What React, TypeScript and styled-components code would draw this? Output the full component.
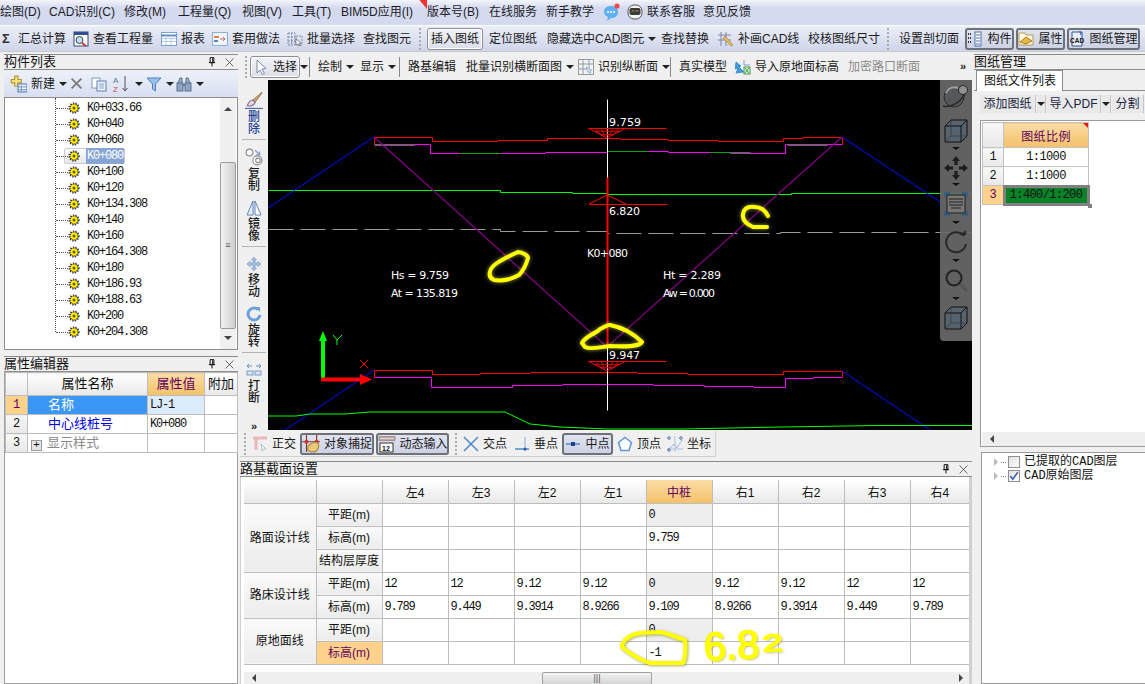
import React from "react";
import styled, { createGlobalStyle, css } from "styled-components";

const UI = `"Liberation Sans", "Noto Sans CJK SC", sans-serif`;
const MONO = `"Liberation Mono", "Noto Sans CJK SC", monospace`;

const Global = createGlobalStyle`
  html, body { margin: 0; padding: 0; background: #f0f0f0; overflow: hidden; }
  * { box-sizing: border-box; }
`;

const Page = styled.div`
  position: relative; width: 1145px; height: 684px; overflow: hidden;
  background: #f0f0f0; font: 12px/16px ${UI}; color: #111;
`;
const MenuBar = styled.div`
  display: flex; align-items: center; height: 26px; padding-bottom: 2px;
  width: 100%;
  background: linear-gradient(#f3f5fb 0, #d5daef 8px, #d3d9ee 100%);
  border-bottom: 1px solid #fff;
`;
const MenuItem = styled.div<{ $w: number }>`
  position: relative; display: flex; align-items: center; gap: 4px;
  flex: 0 0 ${(p) => p.$w}px; white-space: nowrap; color: #1c1c28;
`;
const Flag = styled.span`
  position: absolute; left: -11px; top: -8px; width: 0; height: 0;
  border-top: 13px solid #e33; border-left: 11px solid transparent;
`;
const MainBar = styled.div`
  display: flex; align-items: center; height: 26px;
  background: linear-gradient(#eceef8, #cfd5ea);
  border-bottom: 1px solid #c8c8c8;
  padding-left: 2px;
`;
const Tool = styled.div<{ $w: number; $muted?: boolean }>`
  display: flex; align-items: center; gap: 4px; height: 22px;
  flex: 0 0 ${(p) => p.$w}px; white-space: nowrap;
  color: ${(p) => (p.$muted ? "#8a8a8a" : "#1a1a1a")};
`;
const Sigma = styled.span` font-size: 13px; font-weight: 700; color: #333; `;
const Grip = styled.div`
  flex: 0 0 auto; width: 3px; height: 22px;
  border-left: 2px dotted #aaa; margin-right: auto;
`;
const Sep = styled.div`
  width: 1px; height: 20px; background: #888; margin-right: auto;
`;
const Toggle = styled.div<{ $w: number }>`
  display: flex; align-items: center; justify-content: center; gap: 4px;
  width: ${(p) => p.$w}px; height: 22px; white-space: nowrap;
  border: 1px solid #8b8e98; border-radius: 3px;
  background: linear-gradient(#f2f3f8, #dcdee8);
  box-shadow: inset 0 0 0 1px #fff;
`;
const DarkToggle = styled(Toggle)`
  border: 2px solid #6e7178;
  background: linear-gradient(#e0e3ef, #cdd2e4);
  box-shadow: none;
`;
const Caret = styled.span<{ $ml?: number }>`
  display: inline-block; width: 0; height: 0; flex: none;
  margin-left: ${(p) => p.$ml ?? 0}px;
  border-left: 4px solid transparent; border-right: 4px solid transparent;
  border-top: 4px solid #222;
`;
const Work = styled.div`
  display: grid; grid-template-columns: 240px 732px 173px; height: 632px;
`;
const Column = styled.div`
  display: flex; flex-direction: column; min-width: 0; height: 632px;
`;
const LeftCol = styled(Column)` padding: 2px 2px 0 4px; `;
const PanelTitle = styled.div<{ $mt?: number }>`
  display: flex; align-items: center; justify-content: space-between;
  flex: none; height: 16px; padding: 0 4px 0 0; margin-top: ${(p) => p.$mt ?? 0}px;
  font-size: 13px; line-height: 14px; color: #111;
  border-top: 1px solid #8c8c8c; border-bottom: 1px solid #8c8c8c;
`;
const TitleBtns = styled.span` display: flex; gap: 8px; align-items: center; `;
const NewBar = styled.div`
  display: flex; align-items: center; flex: none; height: 27px; padding-left: 5px;
  background: linear-gradient(#eef1f9, #d8dff1);
`;
const TreeBox = styled.div`
  position: relative; display: flex; flex: none; height: 253px; background: #fff;
  border: 1px solid #8c8c8c; overflow: hidden;
`;
const TreeList = styled.div`
  position: relative; flex: 1; padding-top: 2px;
  &::before {
    content: ""; position: absolute; left: 50px; top: 0; height: 234px;
    border-left: 1px dotted #555;
  }
`;
const TreeRow = styled.div`
  position: relative; display: flex; align-items: center; height: 16px; padding-left: 63px;
  font: 12px/16px ${MONO}; letter-spacing: -1.2px; color: #111;
  &::before {
    content: ""; position: absolute; left: 51px; top: 8px; width: 12px;
    border-top: 1px dotted #555;
  }
`;
const TreeLabel = styled.span<{ $sel?: boolean }>`
  margin-left: 6px; padding: 0 1px; height: 16px;
  ${(p) => p.$sel && css`background: #86a5d6; color: #fff;`}
`;
const TreeSel = styled.span`
  display: flex; align-items: center; padding-left: 3px; margin-left: -4px;
  border: 1px solid #c8ccd4; border-radius: 2px; height: 16px;
  background: linear-gradient(#fbfbfb, #e8e8ea);
`;
const VScroll = styled.div`
  display: flex; flex-direction: column; flex: 0 0 16px; margin-right: 1px;
  background: #f0f0f0;
`;
const ScrollEnd = styled.div`
  flex: none; height: 64px; display: flex; justify-content: center; padding-top: 9px;
`;
const UpTri = styled.span`
  width: 0; height: 0; border-left: 4px solid transparent; border-right: 4px solid transparent;
  border-bottom: 4px solid #444;
`;
const VThumb = styled.div`
  flex: 0 0 167px; display: flex; align-items: center; justify-content: center;
  border: 1px solid #9a9a9a; border-radius: 2px;
  background: linear-gradient(90deg, #f2f2f2, #cfcfcf);
  font: 9px/9px ${UI}; color: #555;
`;
const DownEnd = styled.div`
  flex: 1; display: flex; justify-content: center; padding-top: 7px;
`;
const DownTri = styled(UpTri)`
  border-bottom: 0; border-top: 4px solid #444;
`;
const PropBox = styled.div`
  flex: 1; background: #fff; border: 1px solid #a0a0a0; border-top: 0; padding: 0;
`;
const PropTable = styled.table`
  border-collapse: collapse; table-layout: fixed; width: 232px; font-size: 12px;
  td, th { border: 1px solid #bdbdbd; height: 19px; padding: 0; font-weight: 400; overflow: hidden; white-space: nowrap; }
`;
const HeadCell = styled.th<{ $hot?: boolean }>`
  && { height: 23px; }
  text-align: center; font-size: 13px;
  background: ${(p) => (p.$hot ? "linear-gradient(#fbdca6,#f3c168)" : "linear-gradient(#fff,#e9e9e9)")};
  color: ${(p) => (p.$hot ? "#600060" : "#111")};
`;
const NumCell = styled.td<{ $hot?: boolean }>`
  text-align: center; font: 12px ${MONO};
  background: ${(p) => (p.$hot ? "#ffd28c" : "linear-gradient(#f8f8f8,#e8e8e8)")};
  color: ${(p) => (p.$hot ? "#600060" : "#111")};
`;
const NameCell = styled.td<{ $tone: "sel" | "link" | "mute" }>`
  font-size: 13px; padding-left: 20px !important;
  background: ${(p) => (p.$tone === "sel" ? "#3a97f5" : "#fff")};
  color: ${(p) => (p.$tone === "sel" ? "#fff" : p.$tone === "link" ? "#0000e6" : "#8a8a8a")};
`;
const ValCell = styled.td<{ $sel?: boolean }>`
  font: 12px ${MONO}; letter-spacing: -1.2px; padding-left: 2px !important;
  background: ${(p) => (p.$sel ? "#dcebfb" : "#fff")};
`;
const Expander = styled.span`
  display: inline-flex; align-items: center; justify-content: center;
  width: 11px; height: 11px; margin: 0 5px 0 -17px; vertical-align: -1px;
  border: 1px solid #999; background: #e6e6e6; color: #111; font: 11px/9px ${MONO};
`;
const CanvasBar = styled.div`
  display: flex; align-items: center; flex: none; height: 27px; margin-top: 1px; padding-left: 5px;
  background: #f0f0f0;
`;
const CanvasRow = styled.div` display: flex; flex: none; height: 350px; `;
const SideBar = styled.div`
  display: flex; flex-direction: column; align-items: center; flex: 0 0 28px;
  padding-top: 11px; background: #f0f0f0; position: relative;
`;
const SideTool = styled.div<{ $h: number }>`
  display: flex; flex-direction: column; align-items: center; gap: 2px;
  flex: 0 0 ${(p) => p.$h}px;
`;
const SideText = styled.div<{ $blue?: boolean }>`
  width: 12px; font-size: 12px; line-height: 12px; font-weight: 500;
  color: ${(p) => (p.$blue ? "#1f3f95" : "#1a1a1a")};
`;
const SideSep = styled.div<{ $after: number }>`
  flex: none; width: 24px; height: 1px; background: #b5b5b5; margin-bottom: ${(p) => p.$after}px;
`;
const SideMore = styled.div`
  font: 700 11px/11px ${UI}; color: #222; margin-top: 13px;
`;
const BarMore = styled(SideMore)` margin-top: 0; `;
const Canvas = styled.div`
  position: relative; flex: 1; background: #000; overflow: hidden;
`;
const Drawing = styled.svg` display: block; width: 704px; height: 350px; `;
const NavPanel = styled.div`
  position: absolute; right: 0; top: 0; width: 32px; height: 261px;
  display: flex; flex-direction: column; align-items: center; padding-top: 2px;
  background: rgba(104,104,104,.93); border-radius: 0 0 0 4px;
`;
const NavCaret = styled.span<{ $t: number; $b: number }>`
  flex: none; width: 0; height: 0; margin: ${(p) => p.$t}px 0 ${(p) => p.$b}px;
  border-left: 4px solid transparent; border-right: 4px solid transparent;
  border-top: 3px solid #111;
`;
const NavGap = styled.div` flex: none; height: 7px; `;
const SnapBar = styled.div`
  display: flex; align-items: center; flex: none; width: 476px; height: 26px; padding-left: 4px;
  margin-top: 1px; border-right: 1px solid #d0d0d0; border-bottom: 1px solid #d0d0d0;
`;
const SectionWrap = styled.div`
  flex: 1; display: flex; flex-direction: column; padding-top: 4px;
`;
const GridBox = styled.div`
  position: relative; flex: 1; display: flex; flex-direction: column; background: #fff;
  padding: 3px 0 0 3px; border-right: 3px solid #d0d0d0; border-left: 1px solid #d0d0d0;
`;
const DataTable = styled.table`
  border-collapse: collapse; table-layout: fixed; width: 725px; font-size: 12px;
  td, th { border: 1px solid #bdbdbd; height: 23px; padding: 0; font-weight: 400; white-space: nowrap; overflow: hidden; }
  tr > *:last-child { border-right: 0; }
  thead th { border-top: 0; }
  thead th:first-child, tbody td:first-child { border-left: 0; }
`;
const ColHead = styled.th<{ $hot?: boolean }>`
  font: 12px ${UI};
  background: ${(p) => (p.$hot ? "linear-gradient(#fbdca6,#f3c168)" : "linear-gradient(#fff,#e8e8e8)")};
  color: ${(p) => (p.$hot ? "#600060" : "#111")};
  text-align: center;
`;
const GroupCell = styled.td`
  text-align: center; background: linear-gradient(#fafafa,#ececec); color: #111;
`;
const RowCell = styled.td<{ $hot?: boolean }>`
  text-align: center;
  background: ${(p) => (p.$hot ? "#ffd28c" : "linear-gradient(#fafafa,#ececec)")};
  color: ${(p) => (p.$hot ? "#600060" : "#111")};
`;
const Cell = styled.td<{ $grey?: boolean }>`
  font: 12px ${MONO}; letter-spacing: -1.2px; padding-left: 2px !important; color: #111;
  background: ${(p) => (p.$grey ? "#eee" : "#fff")};
`;
const HScroll = styled.div`
  display: flex; align-items: center; margin-top: 7px; height: 12px; width: 725px; background: #efefef;
  flex: none;
`;
const HThumb = styled.div`
  flex: none; width: 110px; height: 12px; margin-left: 286px; display: flex; align-items: center; justify-content: center;
  border: 1px solid #a0a0a0; border-bottom: 0; border-radius: 2px 2px 0 0; background: linear-gradient(#f4f4f4,#d4d4d4);
  font: 9px/9px ${UI}; color: #555; letter-spacing: 0;
`;
const LeftTri = styled.span<{ $ml?: number }>`
  flex: none; margin-left: ${(p) => p.$ml ?? 8}px; width: 0; height: 0;
  border-top: 4px solid transparent; border-bottom: 4px solid transparent; border-right: 4px solid #444;
`;
const RightTri = styled.span`
  flex: none; margin-left: auto; margin-right: 6px; width: 0; height: 0;
  border-top: 4px solid transparent; border-bottom: 4px solid transparent; border-left: 4px solid #444;
`;
const RightCol = styled(Column)` padding: 2px 0 0 2px; `;
const TabStrip = styled.div`
  display: flex; flex: none; height: 21px; padding-left: 2px; border-bottom: 1px solid #8c8c8c;
`;
const Tab = styled.div`
  width: 87px; height: 21px; padding-left: 7px; background: #fff; font-size: 12px; line-height: 20px;
  border: 1px solid #8c8c8c; border-bottom: 0;
`;
const PdfBar = styled.div`
  display: flex; align-items: center; gap: 1px; flex: none; height: 18px; margin: 4px 0 7px 6px;
`;
const PdfBtn = styled.div<{ $w: number }>`
  flex: 0 0 ${(p) => p.$w}px; height: 18px; display: flex; align-items: center; justify-content: center;
  background: #e9e9e9; border-right: 1px solid #c4c4c4; color: #1a2340; white-space: nowrap;
`;
const SheetBox = styled.div`
  position: relative; flex: none; height: 327px; margin-left: 6px; padding: 1px 0 0 1px; background: #fff;
  border: 1px solid #9a9a9a; border-right: 0; display: flex; flex-direction: column;
`;
const SheetTable = styled.table`
  border-collapse: collapse; table-layout: fixed; width: 106px; font: 12px ${MONO};
  td, th { border: 1px solid #c2c2c2; height: 19px; padding: 0; font-weight: 400; white-space: nowrap; overflow: visible; }
`;
const SheetHead = styled.th`
  position: relative; && { height: 25px; } font: 12px ${UI}; text-align: center; letter-spacing: .4px;
  background: linear-gradient(#fbdca6,#f3c168); color: #600060;
  &::after {
    content: ""; position: absolute; right: 0; top: 0; width: 0; height: 0;
    border-top: 5px solid #e11; border-left: 5px solid transparent;
  }
`;
const SheetCell = styled.td<{ $sel?: boolean }>`
  position: relative; text-align: center; font-size: 12px; letter-spacing: -.6px; color: #111;
  ${(p) => p.$sel && css`
    background: #0a8228; outline: 3px solid #808080; outline-offset: -2px;
    &::after { content: ""; position: absolute; right: -4px; bottom: -4px; width: 4px; height: 4px; background: #808080; }
  `}
`;
const SheetScroll = styled.div`
  margin-top: auto; height: 14px; display: flex; align-items: center; background: #efefef;
  padding-left: 8px; flex: none;
`;
const LayerBox = styled.div`
  flex: 1; margin: 5px 0 0 7px; padding: 2px 0 0 12px; background: #fff;
  border: 1px solid #9a9a9a; border-right: 0;
`;
const LayerRow = styled.div`
  display: flex; align-items: center; height: 14px; font: 12px/14px ${MONO}; color: #111;
`;
const Twisty = styled.span`
  flex: none; width: 0; height: 0; border-top: 4px solid transparent; border-bottom: 4px solid transparent;
  border-left: 4px solid #bbb; margin-right: 3px;
`;
const Dots = styled.span` flex: none; width: 5px; border-top: 1px dotted #777; margin-right: 2px; `;
const Check = styled.span`
  flex: none; width: 12px; height: 12px; margin-right: 4px; border: 1px solid #8e8f8f;
  background: linear-gradient(135deg,#e2e2e2,#fbfbfb); display: flex; align-items: center; justify-content: center;
`;
const Ink = styled.svg`
  position: absolute; left: 0; top: 0; pointer-events: none;
  filter: drop-shadow(1px 1px 1.5px rgba(120,120,0,.6));
`;
const Scrawl = styled.div`
  position: absolute; left: 704px; top: 622px; display: flex; align-items: baseline; gap: 2px;
  font: 400 40px/46px "Liberation Sans", sans-serif;
  color: #ff0; transform: rotate(-3deg);
  -webkit-text-stroke: 1.5px #ff0; text-shadow: 1px 1px 2px rgba(120,120,0,.7);
  pointer-events: none;
`;
const ScrawlSmall = styled.span`
  font-size: 24px; display: inline-block; margin-left: 1px;
  transform: translateY(-6px) scaleX(1.5); transform-origin: left bottom;
`;
const Ico = styled.svg<{ $s?: number }>`
  flex: none; display: block; width: ${(p) => p.$s ?? 16}px; height: ${(p) => p.$s ?? 16}px;
`;

type I = { s?: number };
const Icon = ({ s, children }: I & { children: React.ReactNode }) => (
  <Ico $s={s} viewBox="0 0 16 16" fill="none">{children}</Ico>
);

const Pin = () => (
  <Icon s={10}>
    <path d="M5 1h6v8H5zM3 9h10M8 9v6M9 2v6" stroke="#111" strokeWidth="1.6" />
  </Icon>
);
const Close = () => (
  <Icon s={9}>
    <path d="M1 1l14 14M15 1L1 15" stroke="#333" strokeWidth="1.3" />
  </Icon>
);
const Gear = () => (
  <Icon s={12}>
    <circle cx="8" cy="8" r="5.5" fill="#ffee00" stroke="#222" strokeWidth="1.5" strokeDasharray="2 1" />
    <circle cx="8" cy="8" r="6.8" stroke="#222" strokeWidth="1.6" strokeDasharray="1.5 2.2" />
    <circle cx="8" cy="8" r="2" fill="#665500" />
  </Icon>
);
const ScanDoc = () => (
  <Icon>
    <rect x="1" y="1" width="14" height="14" fill="#fff" stroke="#334a7a" />
    <rect x="1" y="1" width="14" height="3" fill="#2f4f8f" />
    <circle cx="6.5" cy="9" r="3.5" fill="#bfe0f5" stroke="#444" />
    <path d="M9 12l4 3" stroke="#c33" strokeWidth="2" />
  </Icon>
);
const Report = () => (
  <Icon>
    <rect x=".5" y="1.5" width="15" height="13" fill="#fff" stroke="#7da2d2" />
    <path d="M.5 4.5h15" stroke="#5a86c0" strokeWidth="2" />
    <path d="M1 7.5h14M1 10.5h14M5 4v10M10 4v10" stroke="#b5cbe6" />
  </Icon>
);
const ApplyIcon = () => (
  <Icon>
    <rect x=".5" y="1.5" width="15" height="13" fill="#eef5fc" stroke="#8db0d8" />
    <rect x="2" y="5" width="5" height="2" fill="#e8863a" />
    <rect x="2" y="9" width="4" height="2" fill="#5a86c0" />
    <path d="M8 8h5M11 6l2 2-2 2" stroke="#c66" />
  </Icon>
);
const BatchIcon = () => (
  <Icon>
    <path d="M1 2h7v12H1zM1 6h7M1 10h7M4.500 2v12M9 5h6v9H9z" stroke="#7f8da8" strokeDasharray="2 1" />
    <path d="M9 8l5 4-2 .5 1 2-1 .5-1-2-2 1z" fill="#fff" stroke="#666" strokeWidth=".7" />
  </Icon>
);
const PencilGrid = () => (
  <Icon>
    <path d="M3 1v14M8 1v14M0 4h13M0 9h13" stroke="#7c86a8" />
    <path d="M7 5l8 9-2 1-8-8z" fill="#e8c05a" stroke="#a5793a" strokeWidth=".7" />
  </Icon>
);
const PartsIcon = () => (
  <Icon>
    <path d="M1 3h3M1 7h3M1 11h3" stroke="#333" strokeDasharray="1 1" strokeWidth="2" />
    <rect x="8" y="1" width="6" height="14" fill="#fff" stroke="#4a6ea8" />
    <path d="M9 4h4M9 7h4M9 10h4M9 13h4" stroke="#4a6ea8" />
  </Icon>
);
const AttrIcon = () => (
  <Icon>
    <path d="M1 2h6l1 2h7v10H1z" fill="#fff8e0" stroke="#b59a5a" />
    <path d="M2 11l6-5 6 4-6 3z" fill="#e8b93e" stroke="#9a6b14" strokeWidth=".8" />
  </Icon>
);
const CadIcon = () => (
  <Icon>
    <path d="M3 1h10v14H3z" fill="#eaf0fb" stroke="#36578f" />
    <path d="M10 0l3 1-1 4z" fill="#3a6fc4" />
    <text x="1" y="12" fontSize="6.500" fontWeight="700" fontFamily="Liberation Sans" fill="#111">CAD</text>
  </Icon>
);
const NewIcon = () => (
  <Icon s={18}>
    <path d="M5 1h3v3h3v3H8v3H5V7H2V4h3z" fill="#f6e27a" stroke="#b7953a" />
    <rect x="8" y="8" width="8" height="7" fill="#fff" stroke="#5a7fb8" />
    <path d="M8 10.500h8M8 13h8M11 9v6" stroke="#7d9cc9" />
  </Icon>
);
const GreyX = () => (
  <Icon s={13}>
    <path d="M2 2l12 12M14 2L2 14" stroke="#7b7b7b" strokeWidth="2.200" />
  </Icon>
);
const CopyIcon = () => (
  <Icon>
    <rect x="1" y="2" width="8" height="10" fill="#fff" stroke="#7f9cc4" />
    <rect x="6" y="5" width="9" height="10" fill="#eef3fb" stroke="#5c7fb4" />
    <path d="M8 8h5M8 10h5M8 12h5" stroke="#8aa5cc" />
  </Icon>
);
const SortIcon = () => (
  <Ico $s={18} viewBox="0 0 18 18" fill="none">
    <text x="0" y="8" fontSize="8" fontFamily="Liberation Sans" fill="#5777a8">A</text>
    <text x="0" y="17" fontSize="8" fontFamily="Liberation Sans" fill="#c05050">Z</text>
    <path d="M12 1v15M9.500 13l2.500 3 2.500-3" stroke="#555" />
  </Ico>
);
const Funnel = () => (
  <Icon>
    <path d="M1 2h14L9.500 8v7l-3-2V8z" fill="#9cc0ea" stroke="#4f7fb8" />
  </Icon>
);
const Binocular = () => (
  <Icon>
    <path d="M2 7l2-5h2v5M14 7l-2-5h-2v5" fill="#9db3cf" stroke="#5c6f8c" />
    <rect x="1" y="7" width="6" height="8" fill="#8ea6c6" stroke="#5c6f8c" />
    <rect x="9" y="7" width="6" height="8" fill="#8ea6c6" stroke="#5c6f8c" />
    <path d="M7 9h2" stroke="#5c6f8c" strokeWidth="2" />
  </Icon>
);
const Cursor = () => (
  <Icon>
    <path d="M4 1l9 8.500-4 .5 2.500 4.500-2 1L7 11l-3 3z" fill="#fff" stroke="#7d8aa8" />
  </Icon>
);
const Identify = () => (
  <Icon>
    <rect x=".5" y=".5" width="15" height="15" fill="#f3f3f3" stroke="#9a9a9a" />
    <path d="M5 1v14M11 1v10M1 5h14M1 10h9" stroke="#8f9aa8" />
    <path d="M8 8l6 3-2 1 1 2-1 .5-1-2-1 1z" fill="#cfe0f5" stroke="#7d9cc9" strokeWidth=".6" />
  </Icon>
);
const ImportIcon = () => (
  <Icon>
    <path d="M1 3l5 4-2 1 5 5-8 1 2-5-3 1z" fill="#3f9ddf" stroke="#1f73b5" strokeWidth=".6" />
    <rect x="9" y="8" width="6" height="7" fill="#e6f3e1" stroke="#3f9a4a" />
    <path d="M10 9l4 5M14 9l-4 5" stroke="#3f9a4a" />
    <path d="M9 1v5h6" stroke="#7f9cc4" />
  </Icon>
);
const Brush = () => (
  <Icon s={18}>
    <path d="M15 1L7 8l2 2 6-8z" fill="#d8a070" stroke="#7a5b3a" strokeWidth=".6" />
    <path d="M7 8c-3 0-4 3-5 5 3 1 6 0 7-3z" fill="#ddd" stroke="#8f6f9f" />
    <path d="M0 15.500h16" stroke="#4a6a9a" />
  </Icon>
);
const CopyRound = () => (
  <Icon s={18}>
    <circle cx="4" cy="4" r="3" fill="#fff" stroke="#8a8a8a" />
    <path d="M9 2l4 4M13 3v3h-3" stroke="#7d9cc9" />
    <circle cx="11" cy="11" r="4" fill="#fff" stroke="#8a8a8a" />
    <circle cx="11.500" cy="11" r="2" stroke="#8a8a8a" />
  </Icon>
);
const Mirror = () => (
  <Icon>
    <path d="M7 1v14H1z" fill="#e8f0fa" stroke="#5c84bc" />
    <path d="M9 1v14h6z" fill="#fff" stroke="#5c84bc" />
  </Icon>
);
const MoveIcon = () => (
  <Icon>
    <path d="M8 1l2.500 3H9v3h3V5.500L15 8l-3 2.500V9H9v3h1.500L8 15l-2.500-3H7V9H4v1.500L1 8l3-2.500V7h3V4H5.500z" fill="#a9c3e2" stroke="#6c90bf" strokeWidth=".6" />
  </Icon>
);
const RotateIcon = () => (
  <Icon>
    <path d="M12 3.500A6 6 0 1 0 14 9" stroke="#6f9edc" strokeWidth="3" />
    <path d="M9 1h5v5z" fill="#6f9edc" />
  </Icon>
);
const BreakIcon = () => (
  <Icon>
    <path d="M1 4h5M3 2L1 4l2 2M15 4h-5M13 2l2 2-2 2" stroke="#6c90bf" />
    <rect x="1" y="9" width="6" height="4" fill="#dbe6f4" stroke="#7a9ac5" />
    <rect x="9" y="9" width="6" height="4" fill="#dbe6f4" stroke="#7a9ac5" />
  </Icon>
);
const Ortho = () => (
  <Icon>
    <path d="M1 2h14M4 2v12" stroke="#e9b9b9" strokeWidth="3" />
    <path d="M9 8l5 5-2 .5-2 1.500z" fill="#eef3f8" stroke="#9ab" strokeWidth=".7" />
  </Icon>
);
const SnapIcon = () => (
  <Icon s={18}>
    <path d="M4 0v15M13 0v6M0 6h16" stroke="#7a3a30" />
    <circle cx="4" cy="6" r="1.800" fill="#c33" />
    <circle cx="13" cy="6" r="1.800" fill="#c33" />
    <path d="M5 12c0-4 6-6 9-5 2 3 0 8-4 8-3 0-5-1-5-3z" fill="#e8c97a" stroke="#a98a3a" />
  </Icon>
);
const DynIcon = () => (
  <Ico $s={18} viewBox="0 0 18 18" fill="none">
    <path d="M1 2h16M1 5h16" stroke="#b44" />
    <rect x="1" y="2" width="16" height="3" fill="#e9d0c8" stroke="#888" />
    <rect x="2" y="8" width="13" height="9" fill="#fff" stroke="#333" />
    <text x="4" y="15.500" fontSize="7" fontWeight="700" fontFamily="Liberation Sans" fill="#111">12</text>
  </Ico>
);
const Cross = () => (
  <Icon>
    <path d="M1 1l14 14M15 1L1 15" stroke="#4f87c8" strokeWidth="1.500" />
  </Icon>
);
const Foot = () => (
  <Icon>
    <path d="M1 13h14" stroke="#4f87c8" strokeWidth="1.500" />
    <path d="M11 1v14" stroke="#a9c3e2" strokeWidth="1.500" />
    <circle cx="11" cy="13" r="1.500" fill="#2f5fa8" />
  </Icon>
);
const Mid = () => (
  <Icon>
    <path d="M1 8h14" stroke="#4f87c8" strokeWidth="1.500" />
    <rect x="6" y="6" width="4" height="4" fill="#1f3f8f" />
  </Icon>
);
const Pent = () => (
  <Icon>
    <path d="M8 1.500l6.500 5-2.500 8H4l-2.500-8z" fill="#fff" stroke="#5f97d8" strokeWidth="1.500" />
  </Icon>
);
const Coord = () => (
  <Icon>
    <path d="M1 14l6-6 3 4 5-8" stroke="#6f9edc" strokeDasharray="2 1" />
    <path d="M8 0v16M0 13h16" stroke="#a9c3e2" />
    <circle cx="2" cy="2" r="1.300" stroke="#5577aa" />
    <circle cx="14" cy="2" r="1.300" stroke="#5577aa" />
    <circle cx="2" cy="14" r="1.300" stroke="#5577aa" />
  </Icon>
);
const Chat = () => (
  <Ico $s={18} viewBox="0 0 18 18" fill="none">
    <path d="M1 9c0-4 3-6 7-6s7 2 7 6-3 6-7 6l-4 3 1-4c-3-1-4-3-4-5z" fill="#5fb0ee" />
    <circle cx="5" cy="9" r="1" fill="#fff" />
    <circle cx="8" cy="9" r="1" fill="#fff" />
    <circle cx="11" cy="9" r="1" fill="#fff" />
    <circle cx="14" cy="3" r="2.600" fill="#f04848" />
  </Ico>
);
const Robot = () => (
  <Icon>
    <rect x="1" y="1" width="14" height="14" rx="6" fill="#f3f3f3" stroke="#555" />
    <rect x="2.500" y="4" width="11" height="7" rx="2" fill="#3a3a3a" />
    <path d="M5 7.500l1-1 1 1M9 7.500l1-1 1 1" stroke="#f0c040" />
  </Icon>
);

const NavSphere = () => (
  <Ico $s={30} viewBox="0 0 30 30" fill="none">
    <circle cx="13" cy="15" r="10" fill="#55575b" stroke="#2a2a2a" />
    <path d="M5 11a9 9 0 0 1 12-5" stroke="#a0a2a6" strokeWidth="2" />
    <circle cx="22" cy="8" r="4.500" fill="#8e9094" stroke="#2a2a2a" />
    <path d="M2 24c6 2 16-2 22-12" stroke="#2a2a2a" strokeWidth="1.500" />
  </Ico>
);
const NavCube = () => (
  <Ico $s={24} viewBox="0 0 24 24" fill="none">
    <path d="M1 7l6-6h16v16l-6 6H1z" fill="#56636f" stroke="#111" />
    <path d="M1 7h16v16M17 7l6-6" stroke="#111" />
    <path d="M1 23l6-6h16M7 1v16" stroke="#333" strokeWidth=".7" />
  </Ico>
);
const NavPan = () => (
  <Ico $s={24} viewBox="0 0 24 24" fill="#1d1d1d">
    <path d="M12 0l4 5h-2.500v4h-3V5H8zM12 24l-4-5h2.500v-4h3v4H16zM0 12l5-4v2.500h4v3H5V16zM24 12l-5 4v-2.500h-4v-3h4V8z" />
  </Ico>
);
const NavPage = () => (
  <Ico $s={24} viewBox="0 0 24 24" fill="none">
    <path d="M1 5V1h5M18 1h5v4M23 19v4h-5M6 23H1v-4" stroke="#1f5c9a" strokeWidth="1.300" />
    <rect x="3" y="3" width="18" height="18" fill="#777" stroke="#222" />
    <path d="M5 7h14M5 10h14M5 13h14M7 16h10" stroke="#222" />
  </Ico>
);
const NavRotate = () => (
  <Ico $s={24} viewBox="0 0 24 24" fill="none">
    <path d="M20 6A10 10 0 1 0 22 14" stroke="#2a2a2a" strokeWidth="2" />
    <path d="M15 5h7v-5z" fill="#2a2a2a" />
  </Ico>
);
const NavLens = () => (
  <Ico $s={24} viewBox="0 0 24 24" fill="none">
    <circle cx="10" cy="10" r="7.500" stroke="#222" strokeWidth="2" />
    <path d="M16 16l7 7" stroke="#555" strokeWidth="3" />
  </Ico>
);

const stations = [
  "K0+033.66", "K0+040", "K0+060", "K0+080", "K0+100", "K0+120", "K0+134.308", "K0+140",
  "K0+160", "K0+164.308", "K0+180", "K0+186.93", "K0+188.63", "K0+200", "K0+204.308",
];

const columns = ["左4", "左3", "左2", "左1", "中桩", "右1", "右2", "右3", "右4"];
const widths = [72, 66, 66, 66, 66, 66, 66, 66, 66, 66, 59];
type Row = { group?: string; span?: number; name: string; vals: string[]; hot?: boolean; grey?: boolean };
const E = Array(9).fill("");
const withMid = (v: string) => E.map((x, i) => (i === 4 ? v : x));
const rows: Row[] = [
  { group: "路面设计线", span: 3, name: "平距(m)", vals: withMid("0"), grey: true },
  { name: "标高(m)", vals: withMid("9.759") },
  { name: "结构层厚度", vals: E },
  { group: "路床设计线", span: 2, name: "平距(m)", vals: ["12", "12", "9.12", "9.12", "0", "9.12", "9.12", "12", "12"], grey: true },
  { name: "标高(m)", vals: ["9.789", "9.449", "9.3914", "8.9266", "9.109", "8.9266", "9.3914", "9.449", "9.789"] },
  { group: "原地面线", span: 2, name: "平距(m)", vals: withMid("0"), grey: true },
  { name: "标高(m)", hot: true, vals: withMid("-1") },
];

const hatch = (cx: number, top: number, bottom: number) => {
  const out: string[] = [];
  for (let i = -2; i <= 2; i++) {
    out.push(`M${cx + i * 6} ${top}L${cx + i * 2.4} ${bottom - 2}`);
  }
  out.push(`M${cx - 13} ${top + 3.300}H${cx + 13}`);
  out.push(`M${cx - 7} ${top + 6.600}H${cx + 7}`);
  return out.join("");
};

const CadDrawing = () => (
  <Drawing viewBox="268 80 704 350" fill="none">
    <g transform="translate(.5 .5)">
      <path stroke="#0f0" d="M268 190H500V192H572V193H607V194H791V193H972" />
      <path stroke="#9a9a9a" strokeDasharray="25 7" d="M268 229H500V231H607V233H780V232H972" />
      <path stroke="#f0f" d="M374 144H430V153H545V152H607V151H668V152H730V153H785V144H842" />
      <path stroke="#0a0" strokeDasharray="40 50" d="M460 153H545M607 151H668M710 152H785M374 145H428M787 145H842" />
      <path stroke="#f00" d="M374 144V137H432V141H497V140H547V138H620V139H668V140H718V141H783V138H802V137H842V144" />
      <path stroke="#f00" d="M374 377V370H432V374H480V373H530V372H637V373H687V374H783V371H842V377" />
      <path stroke="#f0f" d="M374 377H431V387H512V385H562V384H653V385H704V386H753V387H785V378H813V377H842" />
      <path stroke="#fff" d="M607 99V410" />
      <path stroke="#f00" strokeWidth="2" d="M607 177V345" />
      <path stroke="#f00" d="M588 128H666M589 204H667M588 361H666" />
    </g>
    <path d="M374 137L268 208M842 137L972 223M374 370L285 430M842 371L930 430" stroke="#00f" />
    <path d="M268 416H296L310 414H345L370 412H505L530 424L560 427L607 429H683L780 427L878 425.500H972" stroke="#0f0" />
    <path d="M374 137L607 347L842 137" stroke="#800080" strokeWidth="1.300" />
    <g stroke="#f00">
      <path d="M588 128L607 138L626 128M589 204L607 195L626 204M588 361L607 371L626 361" />
      <path d={hatch(607, 128, 138)} strokeWidth=".8" />
      <path d={hatch(607, 361, 371)} strokeWidth=".8" />
    </g>
    <g fill="#fff" fontFamily="DejaVu Sans, sans-serif" fontSize="11">
      <text x="609" y="126" textLength="32">9.759</text>
      <text x="609" y="215" textLength="31">6.820</text>
      <text x="609" y="359" textLength="31">9.947</text>
      <text x="587" y="257" textLength="41">K0+080</text>
      <text x="391" y="279" textLength="58">Hs = 9.759</text>
      <text x="391" y="297" textLength="67">At = 135.819</text>
      <text x="663" y="279" textLength="58">Ht = 2.289</text>
      <text x="663" y="297" textLength="52">Aw = 0.000</text>
    </g>
    <path d="M323 380V336" stroke="#0f0" strokeWidth="4" />
    <path d="M323 331L327 341H319z" fill="#0f0" />
    <path d="M321 379.500H362" stroke="#f00" strokeWidth="4" />
    <path d="M360 374L372 379.500L360 385z" fill="#f00" />
    <path d="M333 335L337 340L342 335M337 340V345" stroke="#0f0" />
    <path d="M360 360L368 368M368 360L360 368" stroke="#f00" />
    <g stroke="#ff0" strokeWidth="4" strokeLinejoin="round" strokeLinecap="round" style={{ filter: "drop-shadow(0 0 2px rgba(255,255,120,.6))" }}>
      <path d="M490 272C490 265 505 258 518 252C523 252 528 256 528 258C526 265 522 272 519 275C510 280 500 281 494 280C490 278 489 275 490 272Z" />
      <path d="M768 216C765 210 760 207 755 207C748 206 744 208 743 214C742 220 746 224 753 227L767 227" />
      <path d="M582 343C585 336 597 333 600 329C605 327 608 324 610 325C625 328 635 335 642 342C640 346 625 347 610 346C600 347 590 350 585 347Z" />
    </g>
  </Drawing>
);

export default function App() {
  return (
    <Page>
      <Global />
      <MenuBar>
        <MenuItem $w={49}>绘图(D)</MenuItem>
        <MenuItem $w={75}>CAD识别(C)</MenuItem>
        <MenuItem $w={54}>修改(M)</MenuItem>
        <MenuItem $w={64}>工程量(Q)</MenuItem>
        <MenuItem $w={50}>视图(V)</MenuItem>
        <MenuItem $w={49}>工具(T)</MenuItem>
        <MenuItem $w={86}>BIM5D应用(I)</MenuItem>
        <MenuItem $w={62}><Flag />版本号(B)</MenuItem>
        <MenuItem $w={57}>在线服务</MenuItem>
        <MenuItem $w={57}>新手教学</MenuItem>
        <MenuItem $w={24}><Chat /></MenuItem>
        <MenuItem $w={76}><Robot />联系客服</MenuItem>
        <MenuItem $w={60}>意见反馈</MenuItem>
      </MenuBar>

      <MainBar>
        <Tool $w={16}><Sigma>Σ</Sigma></Tool>
        <Tool $w={55}>汇总计算</Tool>
        <Tool $w={88}><ScanDoc />查看工程量</Tool>
        <Tool $w={51}><Report />报表</Tool>
        <Tool $w={75}><ApplyIcon />套用做法</Tool>
        <Tool $w={76}><BatchIcon />批量选择</Tool>
        <Tool $w={56}>查找图元</Tool>
        <Tool $w={8}><Grip /></Tool>
        <Tool $w={62}><Toggle $w={56}>插入图纸</Toggle></Tool>
        <Tool $w={58}>定位图纸</Tool>
        <Tool $w={114}>隐藏选中CAD图元<Caret /></Tool>
        <Tool $w={57}>查找替换</Tool>
        <Tool $w={90}><PencilGrid />补画CAD线</Tool>
        <Tool $w={79}>校核图纸尺寸</Tool>
        <Tool $w={12}><Grip /></Tool>
        <Tool $w={66}>设置剖切面</Tool>
        <Tool $w={51}><DarkToggle $w={49}><PartsIcon />构件</DarkToggle></Tool>
        <Tool $w={51}><DarkToggle $w={49}><AttrIcon />属性</DarkToggle></Tool>
        <Tool $w={73}><DarkToggle $w={73}><CadIcon />图纸管理</DarkToggle></Tool>
      </MainBar>

      <Work>
        <LeftCol>
          <PanelTitle>
            构件列表
            <TitleBtns><Pin /><Close /></TitleBtns>
          </PanelTitle>
          <NewBar>
            <Tool $w={61}><NewIcon />新建<Caret /></Tool>
            <Tool $w={21}><GreyX /></Tool>
            <Tool $w={22}><CopyIcon /></Tool>
            <Tool $w={33}><SortIcon /><Caret /></Tool>
            <Tool $w={30}><Funnel /><Caret /></Tool>
            <Tool $w={30}><Binocular /><Caret /></Tool>
          </NewBar>
          <TreeBox>
            <TreeList>
              {stations.map((s) => (
                <TreeRow key={s}>
                  {s === "K0+080" ? (
                    <TreeSel><Gear /><TreeLabel $sel>{s}</TreeLabel></TreeSel>
                  ) : (
                    <>
                      <Gear />
                      <TreeLabel>{s}</TreeLabel>
                    </>
                  )}
                </TreeRow>
              ))}
            </TreeList>
            <VScroll>
              <ScrollEnd><UpTri /></ScrollEnd>
              <VThumb>≡</VThumb>
              <DownEnd><DownTri /></DownEnd>
            </VScroll>
          </TreeBox>
          <PanelTitle $mt={6}>
            属性编辑器
            <TitleBtns><Pin /><Close /></TitleBtns>
          </PanelTitle>
          <PropBox>
            <PropTable>
              <colgroup>
                <col width="22" /><col width="120" /><col width="57" /><col width="33" />
              </colgroup>
              <thead>
                <tr>
                  <HeadCell />
                  <HeadCell>属性名称</HeadCell>
                  <HeadCell $hot>属性值</HeadCell>
                  <HeadCell>附加</HeadCell>
                </tr>
              </thead>
              <tbody>
                <tr>
                  <NumCell $hot>1</NumCell>
                  <NameCell $tone="sel">名称</NameCell>
                  <ValCell $sel>LJ-1</ValCell>
                  <ValCell />
                </tr>
                <tr>
                  <NumCell>2</NumCell>
                  <NameCell $tone="link">中心线桩号</NameCell>
                  <ValCell>K0+080</ValCell>
                  <ValCell />
                </tr>
                <tr>
                  <NumCell>3</NumCell>
                  <NameCell $tone="mute"><Expander>+</Expander>显示样式</NameCell>
                  <ValCell />
                  <ValCell />
                </tr>
              </tbody>
            </PropTable>
          </PropBox>
        </LeftCol>

        <Column>
          <CanvasBar>
            <Tool $w={5}><Grip /></Tool>
            <Tool $w={59}>
              <Toggle $w={50}><Cursor />选择</Toggle>
              <Caret $ml={-4} />
            </Tool>
            <Tool $w={9}><Sep /></Tool>
            <Tool $w={42}>绘制<Caret /></Tool>
            <Tool $w={39}>显示<Caret /></Tool>
            <Tool $w={9}><Sep /></Tool>
            <Tool $w={58}>路基编辑</Tool>
            <Tool $w={112}>批量识别横断面图<Caret /></Tool>
            <Tool $w={92}><Identify />识别纵断面<Caret /></Tool>
            <Tool $w={9}><Sep /></Tool>
            <Tool $w={56}>真实模型</Tool>
            <Tool $w={113}><ImportIcon />导入原地面标高</Tool>
            <Tool $w={112} $muted>加密路口断面</Tool>
            <Tool $w={12}><BarMore>»</BarMore></Tool>
          </CanvasBar>
          <CanvasRow>
            <SideBar>
              <SideTool $h={48}><Brush /><SideText $blue>删除</SideText></SideTool>
              <SideSep $after={8} />
              <SideTool $h={52}><CopyRound /><SideText>复制</SideText></SideTool>
              <SideTool $h={46}><Mirror /><SideText>镜像</SideText></SideTool>
              <SideSep $after={9} />
              <SideTool $h={50}><MoveIcon /><SideText>移动</SideText></SideTool>
              <SideTool $h={46}><RotateIcon /><SideText>旋转</SideText></SideTool>
              <SideSep $after={9} />
              <SideTool $h={46}><BreakIcon /><SideText>打断</SideText></SideTool>
              <SideMore>»</SideMore>
            </SideBar>
            <Canvas>
              <CadDrawing />
              <NavPanel>
                <NavSphere />
                <NavGap />
                <NavCube />
                <NavCaret $t={4} $b={6} />
                <NavPan />
                <NavCaret $t={3} $b={6} />
                <NavPage />
                <NavCaret $t={5} $b={6} />
                <NavRotate />
                <NavCaret $t={5} $b={6} />
                <NavLens />
                <NavCaret $t={5} $b={6} />
                <NavCube />
              </NavPanel>
            </Canvas>
          </CanvasRow>
          <SnapBar>
            <Tool $w={8}><Grip /></Tool>
            <Tool $w={48}><Ortho />正交</Tool>
            <Tool $w={76}><DarkToggle $w={74}><SnapIcon />对象捕捉</DarkToggle></Tool>
            <Tool $w={79}><DarkToggle $w={73}><DynIcon />动态输入</DarkToggle></Tool>
            <Tool $w={8}><Grip /></Tool>
            <Tool $w={51}><Cross />交点</Tool>
            <Tool $w={48}><Foot />垂点</Tool>
            <Tool $w={55}><DarkToggle $w={51}><Mid />中点</DarkToggle></Tool>
            <Tool $w={50}><Pent />顶点</Tool>
            <Tool $w={49}><Coord />坐标</Tool>
          </SnapBar>
          <SectionWrap>
            <PanelTitle>
              路基截面设置
              <TitleBtns><Pin /><Close /></TitleBtns>
            </PanelTitle>
            <GridBox>
              <DataTable>
                <colgroup>
                  {widths.map((w, i) => <col key={i} width={w} />)}
                </colgroup>
                <thead>
                  <tr>
                    <ColHead />
                    <ColHead />
                    {columns.map((c) => <ColHead key={c} $hot={c === "中桩"}>{c}</ColHead>)}
                  </tr>
                </thead>
                <tbody>
                  {rows.map((r, i) => (
                    <tr key={i}>
                      {r.group && <GroupCell rowSpan={r.span}>{r.group}</GroupCell>}
                      <RowCell $hot={r.hot}>{r.name}</RowCell>
                      {r.vals.map((v, j) => (
                        <Cell key={j} $grey={r.grey && j === 4}>{v}</Cell>
                      ))}
                    </tr>
                  ))}
                </tbody>
              </DataTable>
              <HScroll>
                <LeftTri />
                <HThumb>|||</HThumb>
                <RightTri />
              </HScroll>
            </GridBox>
          </SectionWrap>
        </Column>

        <RightCol>
          <PanelTitle>图纸管理</PanelTitle>
          <TabStrip><Tab>图纸文件列表</Tab></TabStrip>
          <PdfBar>
            <PdfBtn $w={56}>添加图纸</PdfBtn>
            <PdfBtn $w={7}><Caret /></PdfBtn>
            <PdfBtn $w={54}>导入PDF</PdfBtn>
            <PdfBtn $w={7}><Caret /></PdfBtn>
            <PdfBtn $w={32}>分割</PdfBtn>
          </PdfBar>
          <SheetBox>
            <SheetTable>
              <colgroup><col width="21" /><col width="85" /></colgroup>
              <thead>
                <tr><NumCell as="th" /><SheetHead>图纸比例</SheetHead></tr>
              </thead>
              <tbody>
                <tr><NumCell>1</NumCell><SheetCell>1:1000</SheetCell></tr>
                <tr><NumCell>2</NumCell><SheetCell>1:1000</SheetCell></tr>
                <tr><NumCell $hot>3</NumCell><SheetCell $sel>1:400/1:200</SheetCell></tr>
              </tbody>
            </SheetTable>
            <SheetScroll><LeftTri $ml={0} /></SheetScroll>
          </SheetBox>
          <LayerBox>
            <LayerRow><Twisty /><Dots /><Check />已提取的CAD图层</LayerRow>
            <LayerRow>
              <Twisty /><Dots />
              <Check>
                <Icon s={10}><path d="M2 8l4 5 8-11" stroke="#3f5fa8" strokeWidth="2.500" /></Icon>
              </Check>
              CAD原始图层
            </LayerRow>
          </LayerBox>
        </RightCol>
      </Work>

      <Ink width="1145" height="684" viewBox="0 0 1145 684" fill="none">
        <path d="M622 645C625 638 632 634 640 633L660 632L668 634L685 640C686 650 685 658 683 663L650 663C640 660 628 652 622 647Z" stroke="#ff0" strokeWidth="4" strokeLinejoin="round" strokeLinecap="round" />
      </Ink>
      <Scrawl>6.8<ScrawlSmall>2</ScrawlSmall></Scrawl>
    </Page>
  );
}
